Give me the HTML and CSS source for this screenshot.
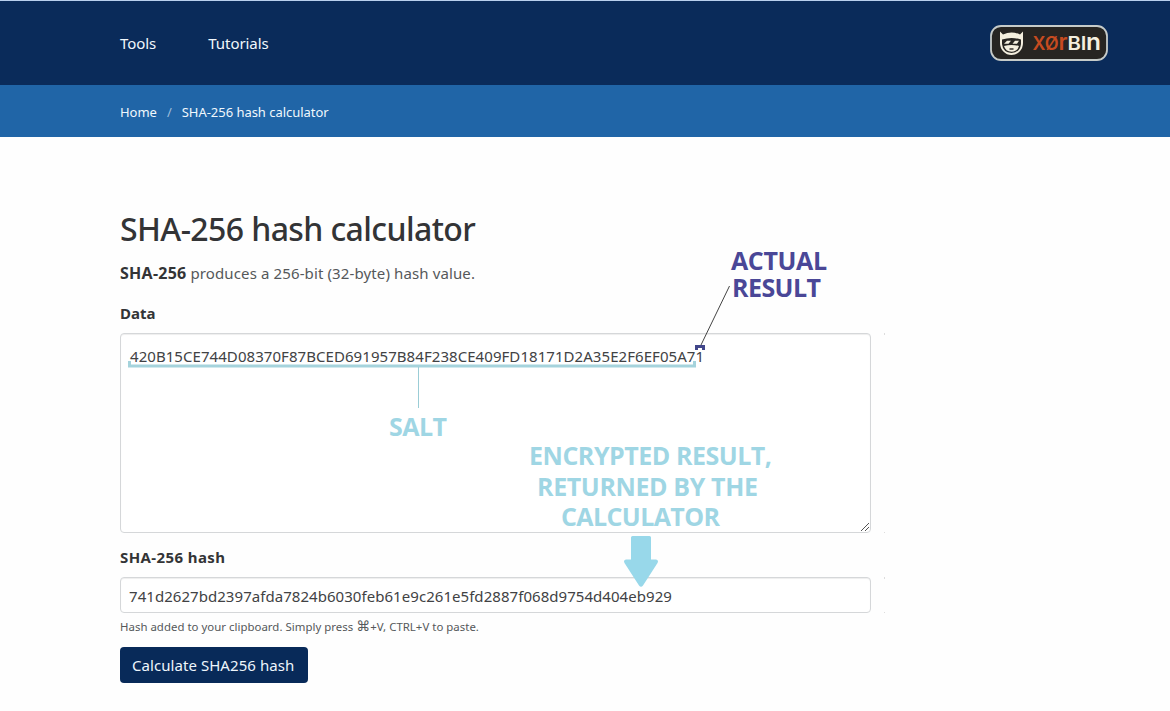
FILE: index.html
```html
<!DOCTYPE html>
<html lang="en">
<head>
<meta charset="utf-8">
<title>SHA-256 hash calculator</title>
<link rel="stylesheet" href="styles.css">
</head>
<body>
<header class="topbar">
  <nav class="nav"><a class="nav-tools">Tools</a><a class="nav-tutorials">Tutorials</a></nav>
  <svg class="logo" width="118" height="36" viewBox="0 0 118 36">
    <rect x="1" y="1" width="116" height="34" rx="10" fill="#272522" stroke="#c6cbc9" stroke-width="1.8"/>
    <path d="M10 6.500 L13 9.500 Q21.500 5.500 30 9.500 L33 6.500 L33 18 A11.500 12 0 0 1 10 18Z" fill="#f4efdf"/>
    <path d="M12 14.500 Q21.500 11.500 31 14.500 V19 Q30 27.500 21.500 28 Q13 27.500 12 19Z" fill="#272522"/>
    <path d="M14 21 Q21.500 19 29 21 Q27.500 26.500 21.500 26.800 Q15.500 26.500 14 21Z" fill="#f4efdf"/>
    <path d="M14 18.800 L17 15.800 H21 L18.500 18.800Z M22.500 18.800 L25 15.800 H29 L27 18.800Z" fill="#f4efdf"/>
    <path d="M19.500 24 H23.500" stroke="#272522" stroke-width="1.400"/>
    <g class="wordmark">
      <text class="word-orange" x="42.500" y="24.500" font-size="18" textLength="26" lengthAdjust="spacingAndGlyphs">XØ</text>
      <text class="word-orange" x="68.500" y="24.500" font-size="22.500" textLength="9" lengthAdjust="spacingAndGlyphs">r</text>
      <text class="word-cream" x="77.500" y="24.500" font-size="18" textLength="19" lengthAdjust="spacingAndGlyphs">BI</text>
      <text class="word-cream" x="96" y="24.500" font-size="22.500" textLength="15" lengthAdjust="spacingAndGlyphs">n</text>
    </g>
  </svg>
</header>
<div class="breadcrumb"><a class="crumb-home">Home</a><span class="slash">/</span><span class="crumb-page">SHA-256 hash calculator</span></div>
<main class="content">
  <h1 class="title">SHA-256 hash calculator</h1>
  <p class="intro"><b class="intro-name">SHA-256</b><span class="intro-text">produces a 256-bit (32-byte) hash value.</span></p>
  <label class="label label-data">Data</label>
  <div class="field area"><span class="data-text">420B15CE744D08370F87BCED691957B84F238CE409FD18171D2A35E2F6EF05A71</span>
    <svg class="grip" width="10" height="10"><path d="M1 9 L9 1 M5 9 L9 5" stroke="#555" fill="none"/></svg>
  </div>
  <label class="label label-hash">SHA-256 hash</label>
  <div class="field output"><span class="hash-text">741d2627bd2397afda7824b6030feb61e9c261e5fd2887f068d9754d404eb929</span></div>
  <p class="help"><span class="help-text">Hash added to your clipboard. Simply press <span class="cmd">⌘</span>+V, CTRL+V to paste.</span></p>
  <button class="button"><span class="button-text">Calculate SHA256 hash</span></button>
</main>
<svg class="notes" width="1170" height="711" viewBox="0 0 1170 711">
  <path d="M884.500 333 V335 M884.500 532 V533 M884.500 577 V579 M884.500 612 V613" stroke="#ddd"/>
  <path d="M129.500 361 V366 H694.500 V361" fill="none" stroke="#a5d3dc" stroke-width="3"/>
  <path d="M418.500 367 V408" stroke="#9bcdd6"/>
  <path d="M729.500 286 L700.500 346" stroke="#444" stroke-width="1"/>
  <path d="M696.500 350 V346.500 H703.500 V350" fill="none" stroke="#42478a" stroke-width="3"/>
  <path d="M632.500 536 H649.500 Q651 536 651 537.500 V559.500 H656 Q659 560 657.500 563 L643 585.500 Q641 588 639 585.500 L624.500 563 Q623 560 626 559.500 H631 V537.500 Q631 536 632.500 536Z" fill="#98d8ea"/>
  <g class="note-violet">
    <text x="731" y="270" textLength="96">ACTUAL</text>
    <text x="732" y="297" textLength="89">RESULT</text>
  </g>
  <g class="note-cyan">
    <text x="389" y="436" textLength="58">SALT</text>
    <text x="529" y="465" textLength="243">ENCRYPTED RESULT,</text>
    <text x="537" y="496" textLength="221">RETURNED BY THE</text>
    <text x="561" y="526" textLength="159">CALCULATOR</text>
  </g>
</svg>
</body>
</html>
```

FILE: styles.css
```css
* { box-sizing: border-box; }
body { margin: 0; height: 711px; overflow: hidden; position: relative; background: #fefefe; color: #333436; font-family: "Noto Sans", "Open Sans", sans-serif; font-size: 15px; }
.topbar { height: 85px; background: #0a2b5a; border-top: 1px solid #b9d0ee; padding: 0 62px 0 120px; display: flex; align-items: center; justify-content: space-between; }
.nav { display: flex; gap: 52px; color: #f1f8fc; line-height: 24px; letter-spacing: -0.05px; }
.logo { display: block; }
.wordmark { font-family: Inter, sans-serif; font-weight: 600; }
.word-orange { fill: #c64b20; }
.word-cream { fill: #f4efdf; }
.breadcrumb { height: 52px; background: #2065a7; padding: 1px 0 0 120px; display: flex; align-items: center; color: #f0f8fd; font-size: 13px; letter-spacing: -0.03px; }
.slash { color: #9dbddb; margin: 0 10px; }
.content { padding: 71px 0 0 120px; display: flex; flex-direction: column; align-items: flex-start; }
.title { margin: 0; font-size: 32px; font-weight: 500; line-height: 42px; letter-spacing: -0.6px; }
.intro { margin: 12px 0 0; line-height: 22px; display: flex; gap: 4px; }
.intro-name { font-size: 16px; letter-spacing: 0.25px; }
.intro-text { color: #55585a; letter-spacing: 0.12px; }
.label { font-weight: 700; line-height: 22px; }
.label-data { margin-top: 18px; }
.label-hash { margin-top: 13px; letter-spacing: 0.4px; }
.field { width: 751px; border: 1px solid #d5d7d9; border-radius: 4px; background: #fff; box-shadow: inset 0 1px 1px #eee; padding: 0 9px; color: #414244; position: relative; }
.area { height: 200px; margin-top: 9px; padding-top: 10px; line-height: 24px; letter-spacing: 0.06px; }
.grip { position: absolute; right: 0; bottom: 0; }
.output { height: 36px; margin-top: 9px; padding-left: 8px; line-height: 37px; letter-spacing: 0.05px; }
.help { margin: 4px 0 0; font-size: 11.4px; line-height: 20px; color: #55585a; letter-spacing: 0.03px; }
.cmd { font-family: "DejaVu Sans", sans-serif; font-size: 14px; line-height: 1; }
.button { margin-top: 10px; width: 188px; height: 36px; padding: 0 0 0 12px; border: 0; border-radius: 4px; background: #082a59; color: #eef6fc; font: 15px "Noto Sans", sans-serif; letter-spacing: 0.06px; text-align: left; white-space: nowrap; }
.notes { position: absolute; left: 0; top: 0; pointer-events: none; }
.note-violet, .note-cyan { font-family: "Open Sans", sans-serif; font-weight: 700; font-size: 25px; }
.note-violet { fill: #4a4797; }
.note-cyan { fill: #9fd6e4; }
```
